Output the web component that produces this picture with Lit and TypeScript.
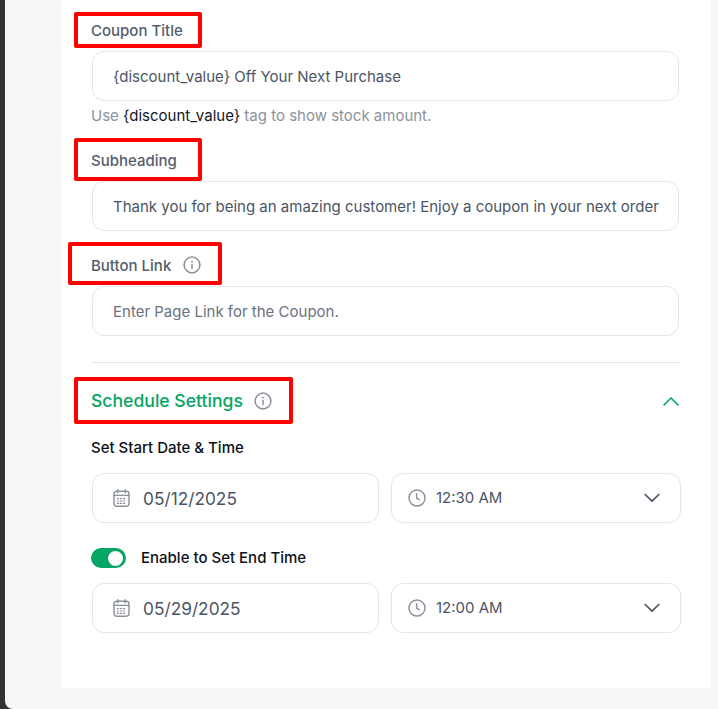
import { LitElement, html, css, svg } from "lit";
import { customElement } from "lit/decorators.js";

const info = html`<svg class="info" width="18" height="18" viewBox="0 0 18 18" fill="none" stroke="#8a8f9a" stroke-width="1.5" stroke-linecap="round"><circle cx="9" cy="9" r="7.9"/><path d="M9 8.4v4"/><path d="M9 5.6v.1" stroke-width="1.8"/></svg>`;

const calendar = html`<svg width="17" height="18" viewBox="0 0 17 18" fill="none" stroke="#8a8f9a" stroke-width="1.4" stroke-linecap="round"><rect x="1" y="2.2" width="15" height="15" rx="2.6"/><path d="M1 6.4h15M4.8 .8v3M12.2 .8v3"/>${svg`<g stroke-width="1.1" stroke-dasharray="1.2 1.9"><path d="M4.2 9.6h9M4.2 12h9M4.2 14.4h9"/></g>`}</svg>`;

const clock = html`<svg width="18" height="18" viewBox="0 0 18 18" fill="none" stroke="#8a8f9a" stroke-width="1.4" stroke-linecap="round" stroke-linejoin="round"><circle cx="9" cy="9" r="8"/><path d="M8.6 4.8v4.6l2.8 1.2"/></svg>`;

const chevron = html`<svg width="16" height="10" viewBox="0 0 16 10" fill="none" stroke="#4b5563" stroke-width="1.7" stroke-linecap="round" stroke-linejoin="round"><path d="M1.2 1.5 8 8.2l6.8-6.7"/></svg>`;

@customElement("app-root")
export class AppRoot extends LitElement {
  static styles = css`
    :host { display: block; width: 718px; height: 709px; overflow: hidden; background: #333; font-family: Inter, "Liberation Sans", sans-serif; }
    .panel { margin-left: 5px; height: 709px; background: #f6f7f9; border-bottom-left-radius: 8px; padding-left: 56px; padding-right: 7px; box-sizing: border-box; }
    .card { background: #fff; height: 688px; box-sizing: border-box; padding: 0 30px; display: flex; flex-direction: column; }
    .label { position: relative; height: 20px; display: flex; align-items: center; gap: 12px; font-size: 15px; font-weight: 450; color: #565d6b; }
    .mark { position: absolute; border: 4px solid #f00; border-radius: 2px; box-sizing: border-box; pointer-events: none; }
    .m1 { left: -17px; top: -8px; width: 128px; height: 36px; }
    .m2 { left: -17px; top: -12px; width: 128px; height: 43px; }
    .m3 { left: -23px; top: -13px; width: 154px; height: 43px; }
    .m4 { left: -17px; top: -14px; width: 219px; height: 47px; }
    .input { box-sizing: border-box; height: 50px; width: 587px; margin-left: 1px; border: 1px solid #e5e6ec; border-radius: 12px; padding: 0 20px; display: flex; align-items: center; font-size: 15px; color: #4b5563; white-space: nowrap; background: #fff; }
    .placeholder { color: #6b7280; }
    .hint { font-size: 15px; color: #8d929c; margin-top: 5px; height: 20px; line-height: 20px; }
    .hint b { font-weight: 400; color: #111827; }
    .f1 { margin-top: 20px; }
    .gap { margin-top: 11px; }
    .f2 { margin-top: 24px; }
    .f3 { margin-top: 24px; }
    .rule { height: 1px; background: #e5e6ec; margin-top: 26px; }
    .section { margin-top: 28px; height: 20px; display: flex; align-items: center; justify-content: space-between; padding-right: 2px; }
    .title { position: relative; display: flex; align-items: center; gap: 11px; font-size: 17.6px; font-weight: 500; color: #05a564; line-height: 20px; height: 20px; }
    .sub { font-size: 15px; font-weight: 450; color: #0b0f19; height: 20px; line-height: 20px; }
    .set { margin-top: 27px; }
    .row { display: flex; gap: 12px; margin-left: 1px; margin-top: 15px; }
    .row .box { box-sizing: border-box; height: 50px; border: 1px solid #e5e6ec; border-radius: 12px; display: flex; align-items: center; color: #4b5563; background: #fff; }
    .date { width: 287px; padding-left: 20px; gap: 13px; font-size: 17.3px; }
    .time { width: 290px; padding: 0 20px 0 16px; gap: 10px; font-size: 15px; }
    .time span { flex: 1; padding-bottom: 1px; }
    .toggle-row { display: flex; align-items: center; gap: 15px; margin-top: 25px; height: 20px; }
    .toggle { width: 35px; height: 20px; border-radius: 10px; background: #05a564; position: relative; flex: none; }
    .toggle i { position: absolute; right: 3px; top: 2.5px; width: 15px; height: 15px; border-radius: 50%; background: #fff; }
    .toggle-row + .row { margin-top: 15px; }
  `;

  private dateTime(d: string, t: string) {
    return html`<div class="row">
      <div class="box date">${calendar}<span>${d}</span></div>
      <div class="box time">${clock}<span>${t}</span>${chevron}</div>
    </div>`;
  }

  render() {
    return html`<div class="panel"><div class="card">
      <div class="label f1">Coupon Title<i class="mark m1"></i></div>
      <div class="input gap">{discount_value} Off Your Next Purchase</div>
      <div class="hint">Use <b>{discount_value}</b> tag to show stock amount.</div>
      <div class="label f2">Subheading<i class="mark m2"></i></div>
      <div class="input gap">Thank you for being an amazing customer! Enjoy a coupon in your next order</div>
      <div class="label f3">Button Link ${info}<i class="mark m3"></i></div>
      <div class="input gap placeholder">Enter Page Link for the Coupon.</div>
      <div class="rule"></div>
      <div class="section">
        <div class="title">Schedule Settings ${info}<i class="mark m4"></i></div>
        <svg width="16" height="9" viewBox="0 0 16 9" fill="none" stroke="#05a564" stroke-width="1.5"><path d="M.6 8.4 8 1l7.4 7.4"/></svg>
      </div>
      <div class="sub set">Set Start Date &amp; Time</div>
      ${this.dateTime("05/12/2025", "12:30 AM")}
      <div class="toggle-row"><div class="toggle"><i></i></div><div class="sub">Enable to Set End Time</div></div>
      ${this.dateTime("05/29/2025", "12:00 AM")}
    </div></div>`;
  }
}
